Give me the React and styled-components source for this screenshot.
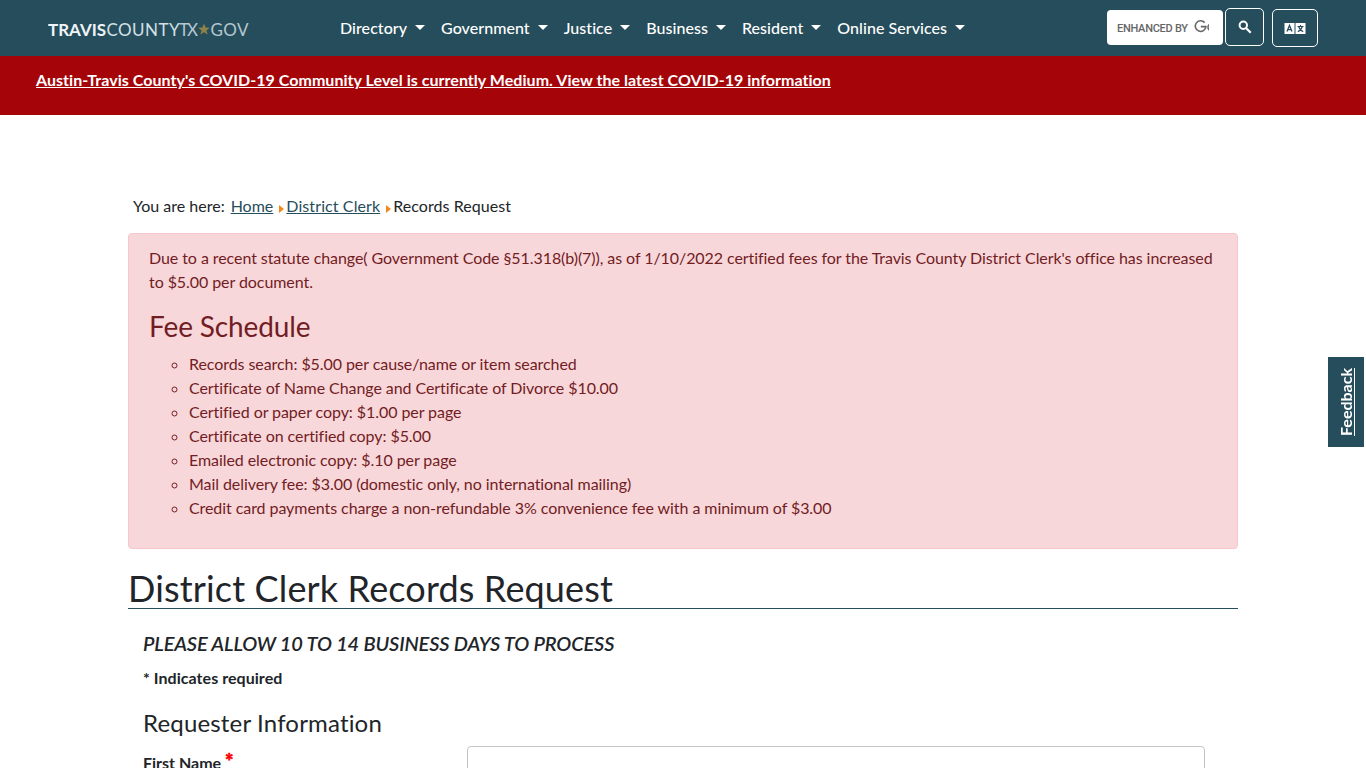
import React from 'react';
import styled, { createGlobalStyle } from 'styled-components';

const GlobalStyle = createGlobalStyle`
  *,
  *::before,
  *::after {
    box-sizing: border-box;
  }
  html,
  body {
    margin: 0;
    height: 768px;
    overflow: hidden;
  }
  body {
    background: #fff;
    color: #212529;
    font-family: Lato, 'Liberation Sans', sans-serif;
    font-size: 16px;
    line-height: 1.5;
  }
`;

const Header = styled.header`
  display: flex;
  align-items: center;
  height: 56px;
  padding: 0 48px;
  background: #264d5b;
`;

const Logo = styled.svg`
  display: block;
  width: 202px;
  height: 24px;
  margin-right: 82px;
`;

const Nav = styled.nav`
  display: flex;
`;

const NavLink = styled.a`
  display: flex;
  align-items: center;
  padding: 0 8px;
  color: #fff;
  font-weight: 500;
  letter-spacing: 0.05px;
  white-space: nowrap;

  &::after {
    content: '';
    margin: -2px 0 0 8px;
    border-top: 5px solid;
    border-left: 5px solid transparent;
    border-right: 5px solid transparent;
  }
`;

const Tools = styled.div`
  display: flex;
  align-items: flex-start;
  height: 56px;
  padding-top: 8px;
  margin-left: auto;
`;

const SearchBox = styled.div`
  display: flex;
  align-items: center;
  width: 116px;
  height: 35px;
  margin: 2px 2px 0 0;
  padding: 0 14px 0 10px;
  border-radius: 4px;
  background: #fff;
`;

const SearchHint = styled.svg`
  display: block;
  width: 92px;
  height: 35px;
`;

const ToolButton = styled.button`
  display: flex;
  align-items: center;
  justify-content: center;
  width: ${props => props.$width};
  height: 38px;
  margin: ${props => props.$margin || 0};
  padding: 0;
  border: 1px solid #fff;
  border-radius: 5px;
  background: transparent;
`;

const Banner = styled.div`
  height: 59px;
  padding: 12px 36px;
  background: #a50508;
`;

const BannerLink = styled.a`
  color: #fff;
  font-weight: 700;
  letter-spacing: 0.038px;
  text-decoration: underline;
`;

const Main = styled.main`
  width: 1110px;
  margin: 79px 0 0 128px;
`;

const Breadcrumb = styled.div`
  display: flex;
  align-items: center;
  height: 24px;
  margin-bottom: 15px;
  padding-left: 5px;
`;

const Crumb = styled.a`
  margin-left: ${props => props.$gap};
  color: #264d5b;
  letter-spacing: ${props => props.$spacing || 'normal'};
  text-decoration: underline;
`;

const Current = styled.span`
  margin-left: 2px;
  letter-spacing: 0.06px;
`;

const Arrow = styled.i`
  margin: 6px 0 0 6px;
  border-left: 5px solid #f08a1d;
  border-top: 4px solid transparent;
  border-bottom: 4px solid transparent;
`;

const Alert = styled.section`
  height: 316px;
  padding: 12px 20px;
  border: 1px solid #f5c6cb;
  border-radius: 4px;
  background: #f8d7da;
  color: #721c24;
  letter-spacing: -0.07px;

  p {
    margin: 0 0 16px;
  }
`;

const FeeTitle = styled.h2`
  margin: 0 0 8px;
  font-size: 28px;
  font-weight: 400;
  letter-spacing: -0.13px;
  line-height: 1.2;
`;

const FeeList = styled.ul`
  margin: 0;
  padding-left: 40px;
  list-style: circle;
`;

const PageTitle = styled.h1`
  height: 43px;
  margin: 17px 0 0;
  border-bottom: 1px solid #264d5b;
  font-size: 36px;
  font-weight: 400;
  letter-spacing: 0.15px;
  line-height: 45px;
`;

const Form = styled.form`
  padding: 22px 33px 0 15px;
`;

const Notice = styled.h3`
  margin: 0;
  font-size: 20px;
  font-style: italic;
  font-weight: 600;
  letter-spacing: -0.15px;
  line-height: 24px;
`;

const Required = styled.p`
  margin: 11px 0 18px;
  font-weight: 700;
  letter-spacing: 0.05px;
`;

const Legend = styled.h4`
  margin: 0 0 9px;
  font-size: 24px;
  font-weight: 400;
  letter-spacing: 0.17px;
  line-height: 29px;
`;

const Field = styled.div`
  display: grid;
  grid-template-columns: 324px 1fr;
`;

const Label = styled.label`
  padding-top: 5px;
  font-weight: 700;
`;

const Star = styled.span`
  display: inline-block;
  margin-left: 4px;
  color: #f00;
  font-size: 20px;
  font-weight: 900;
  line-height: 16px;
  -webkit-text-stroke: 0.6px #f00;
`;

const Input = styled.input`
  width: 100%;
  height: 38px;
  border: 1px solid #c4c4c4;
  border-radius: 4px;
`;

const Feedback = styled.a`
  position: fixed;
  top: 357px;
  right: 2px;
  display: flex;
  align-items: center;
  justify-content: center;
  width: 36px;
  height: 90px;
  background: #264d5b;
  color: #fff;
  font-weight: 700;
  text-decoration: underline;
  writing-mode: vertical-rl;
  transform: rotate(180deg);
`;

const menu = [
  'Directory',
  'Government',
  'Justice',
  'Business',
  'Resident',
  'Online Services',
];

const fees = [
  'Records search: $5.00 per cause/name or item searched',
  'Certificate of Name Change and Certificate of Divorce $10.00',
  'Certified or paper copy: $1.00 per page',
  'Certificate on certified copy: $5.00',
  'Emailed electronic copy: $.10 per page',
  'Mail delivery fee: $3.00 (domestic only, no international mailing)',
  'Credit card payments charge a non-refundable 3% convenience fee with a minimum of $3.00',
];

function SiteLogo() {
  return (
    <Logo viewBox="0 0 202 24" fontSize="17">
      <text x="0" y="20" textLength="58" fontWeight="700" fill="#eef4f7">
        TRAVIS
      </text>
      <text x="58.500" y="20" textLength="73" fill="#d3e0e6">
        COUNTY
      </text>
      <text x="131" y="20" textLength="19" fill="#b5c7cf">
        TX
      </text>
      <path
        d="M156 7.500l1.600 4.100 4.200.1-3.400 2.700 1.300 4.200-3.700-2.400-3.700 2.400 1.300-4.200-3.400-2.700 4.200-.1z"
        fill="#8d8249"
      />
      <text x="162.500" y="20" textLength="38" fill="#b5c7cf">
        GOV
      </text>
    </Logo>
  );
}

function SearchIcon() {
  return (
    <svg width="14" height="14" viewBox="0 0 14 14">
      <circle
        cx="5.300"
        cy="5.300"
        r="3.700"
        fill="none"
        stroke="#fff"
        strokeWidth="2"
      />
      <path d="M8.200 8.200l4.500 4.500" stroke="#fff" strokeWidth="2.200" />
    </svg>
  );
}

function LanguageIcon() {
  return (
    <svg width="22" height="11" viewBox="0 0 22 11">
      <path d="M.5 0h10v11H.5zM11.500 0h10v11h-10z" fill="#fff" />
      <path
        d="M3 8.500L5.500 2.500 8 8.500M3.800 6.700h3.400"
        fill="none"
        stroke="#264d5b"
        strokeWidth="1.300"
      />
      <path
        d="M13.500 3.500h6M16.500 2v1.500M18.300 3.500c-.6 2.500-2.200 4.200-4.500 5.200M14.700 3.500c.6 2.500 2.200 4.200 4.500 5.200"
        fill="none"
        stroke="#264d5b"
        strokeWidth="1.100"
      />
    </svg>
  );
}

function App() {
  return (
    <>
      <GlobalStyle />
      <Header>
        <SiteLogo />
        <Nav>
          {menu.map(item => (
            <NavLink key={item}>{item}</NavLink>
          ))}
        </Nav>
        <Tools>
          <SearchBox>
            <SearchHint viewBox="0 0 92 35">
              <text
                x="0"
                y="21.500"
                textLength="71"
                fontFamily="Roboto"
                fontSize="11"
                fontWeight="500"
                fill="#666"
              >
                ENHANCED BY
              </text>
              <path
                d="M87.600 12.600A5.300 5.300 0 1 0 88.900 16.600H83.800M94.500 13.700a3.500 3.500 0 1 0 0 7"
                fill="none"
                stroke="#666"
                strokeWidth="1.600"
              />
            </SearchHint>
          </SearchBox>
          <ToolButton $width="39px">
            <SearchIcon />
          </ToolButton>
          <ToolButton $width="46px" $margin="1px 0 0 8px">
            <LanguageIcon />
          </ToolButton>
        </Tools>
      </Header>
      <Banner>
        <BannerLink>
          Austin-Travis County's COVID-19 Community Level is currently Medium.
          View the latest COVID-19 information
        </BannerLink>
      </Banner>
      <Main>
        <Breadcrumb>
          You are here:
          <Crumb $gap="6px">Home</Crumb>
          <Arrow />
          <Crumb $gap="2px" $spacing="0.1px">
            District Clerk
          </Crumb>
          <Arrow />
          <Current>Records Request</Current>
        </Breadcrumb>
        <Alert>
          <p>
            Due to a recent statute change( Government Code §51.318(b)(7)), as
            of 1/10/2022 certified fees for the Travis County District Clerk's
            office has increased to $5.00 per document.
          </p>
          <FeeTitle>Fee Schedule</FeeTitle>
          <FeeList>
            {fees.map(fee => (
              <li key={fee}>{fee}</li>
            ))}
          </FeeList>
        </Alert>
        <PageTitle>District Clerk Records Request</PageTitle>
        <Form>
          <Notice>PLEASE ALLOW 10 TO 14 BUSINESS DAYS TO PROCESS</Notice>
          <Required>* Indicates required</Required>
          <Legend>Requester Information</Legend>
          <Field>
            <Label>
              First Name
              <Star>*</Star>
            </Label>
            <Input />
          </Field>
        </Form>
      </Main>
      <Feedback>Feedback</Feedback>
    </>
  );
}

export default App;
